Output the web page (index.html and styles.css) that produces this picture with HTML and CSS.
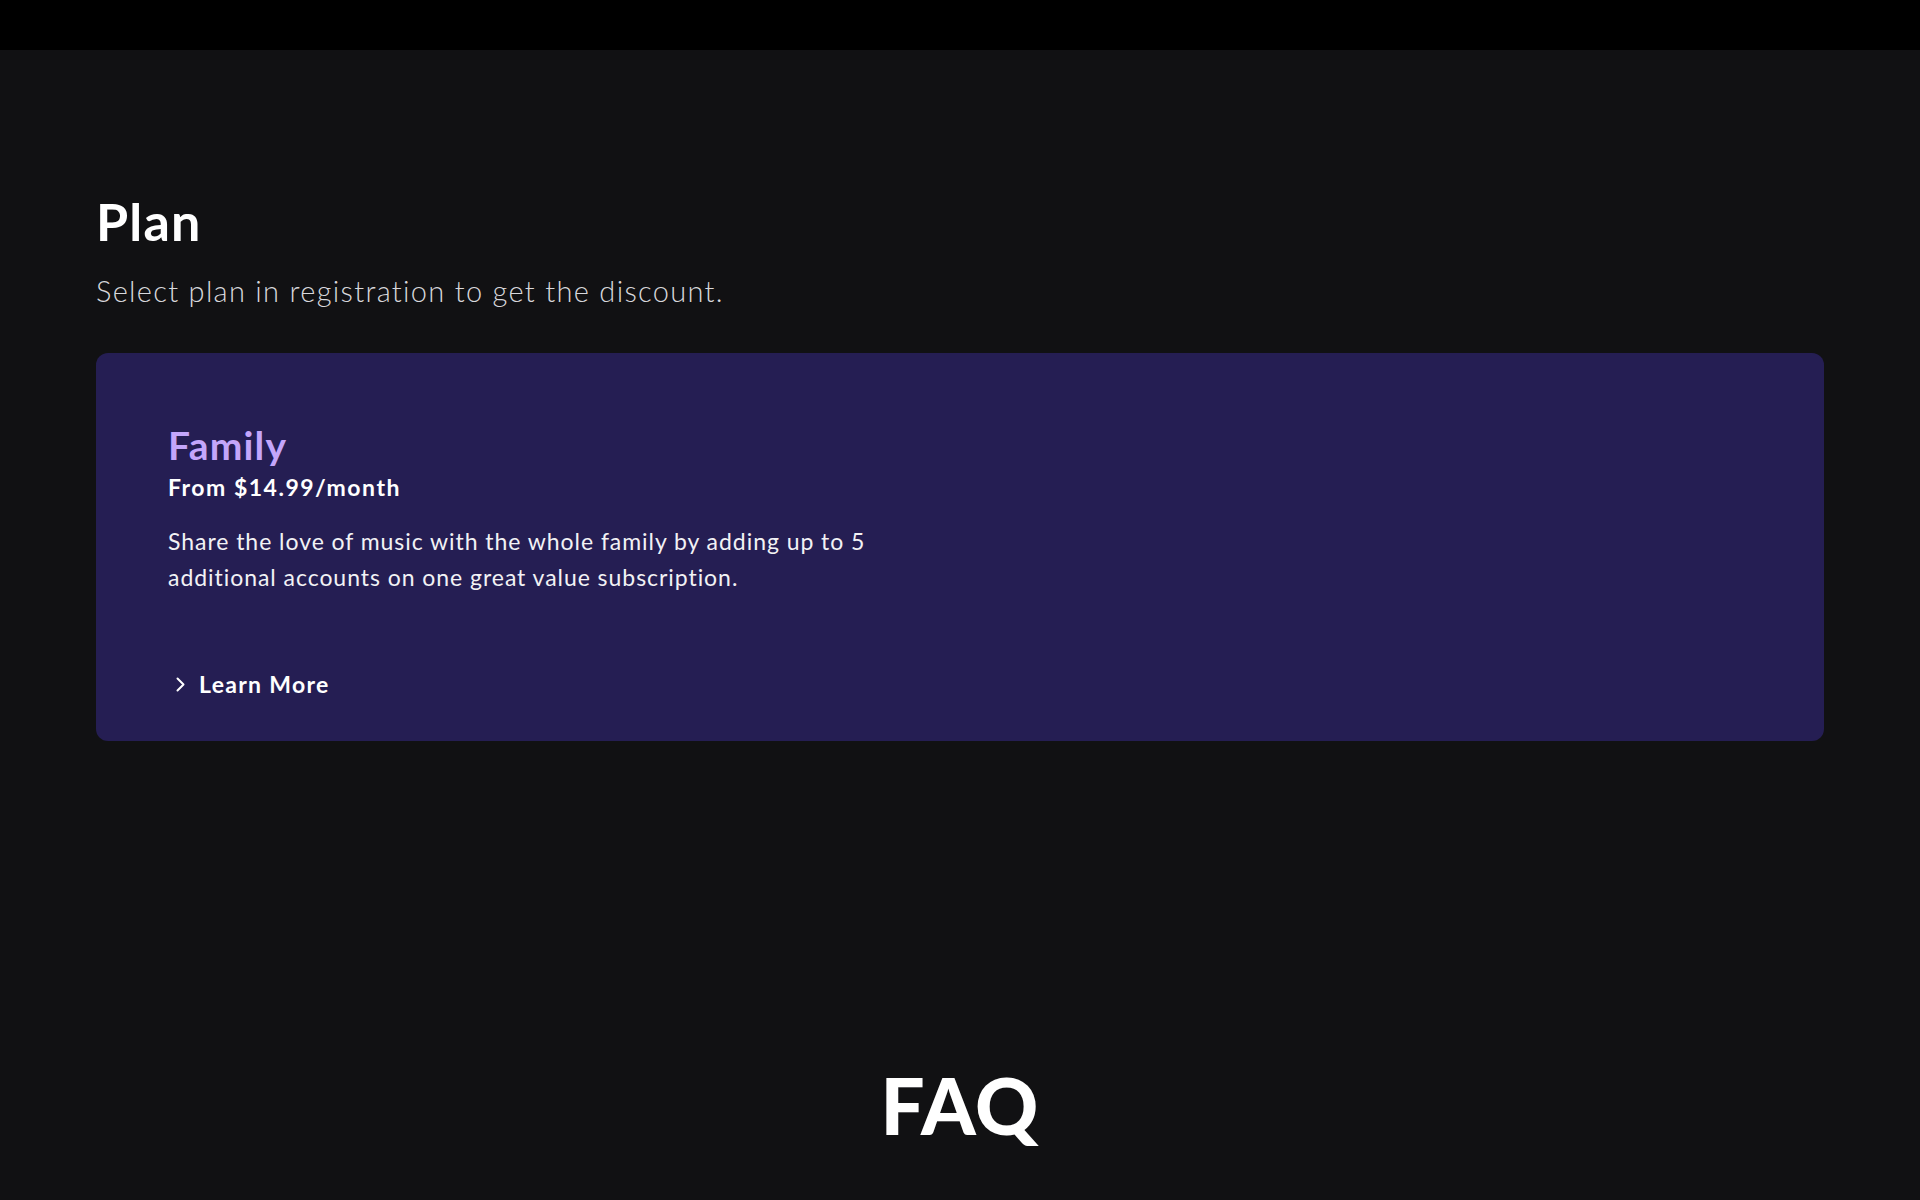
FILE: index.html
```html
<!DOCTYPE html>
<html lang="en">

<head>
    <meta charset="UTF-8">
    <meta name="viewport" content="width=device-width, initial-scale=1.0">
    <title>Plan</title>
    <link rel="stylesheet" href="styles.css">
</head>

<body>
    <div class="topbar"></div>
    <main>
        <section class="plan">
            <h1>Plan</h1>
            <p class="subtitle">Select plan in registration to get the discount.</p>
            <div class="plan-card">
                <h2>Family</h2>
                <p class="price">From $14.99/month</p>
                <p class="desc">Share the love of music with the whole family by adding up to 5 additional accounts on one great value subscription.</p>
                <a class="learn-more" href="#">
                    <svg width="9" height="15" viewBox="0 0 9 15">
                        <path d="M1.5 1.5 L7.5 7.5 L1.5 13.5" fill="none" stroke="#fff" stroke-width="2" stroke-linecap="round" stroke-linejoin="round" />
                    </svg>
                    Learn More
                </a>
            </div>
        </section>
        <section class="faq">
            <h2>FAQ</h2>
        </section>
    </main>
</body>

</html>
```
FILE: styles.css
```css
body {
    margin: 0;
    padding: 0;
    background-color: #111113;
    color: #fff;
    font-family: 'Lato', 'Noto Sans', sans-serif;
}

.topbar {
    height: 50px;
    background-color: #000;
}

.plan {
    padding: 141px 96px 0;
}

.plan h1 {
    margin: 0;
    font-size: 52px;
    line-height: 60px;
    font-weight: 700;
    letter-spacing: 1.2px;
}

.subtitle {
    margin: 21px 0 0;
    font-size: 29px;
    line-height: 38px;
    font-weight: 300;
    letter-spacing: 1.3px;
    color: #d8d8dc;
}

.plan-card {
    margin-top: 43px;
    background-color: #251e53;
    border-radius: 12px;
    padding: 69px 72px 42px;
}

.plan-card h2 {
    margin: 0;
    font-size: 39px;
    line-height: 46px;
    font-weight: 700;
    letter-spacing: 1.2px;
    color: #c4a6fb;
}

.price {
    margin: 3px 0 0;
    font-size: 23px;
    line-height: 32px;
    font-weight: 700;
    letter-spacing: 1.5px;
}

.desc {
    margin: 20px 0 0;
    max-width: 720px;
    font-size: 23px;
    line-height: 36px;
    font-weight: 400;
    letter-spacing: 0.95px;
    color: #f2f2f5;
}

.learn-more {
    display: flex;
    align-items: center;
    gap: 14px;
    margin-top: 74px;
    color: #fff;
    text-decoration: none;
    font-size: 23px;
    font-weight: 700;
    line-height: 30px;
    letter-spacing: 1.3px;
}

.learn-more svg {
    margin-left: 8px;
}

.faq {
    padding-top: 319px;
    text-align: center;
}

.faq h2 {
    margin: 0;
    font-size: 78px;
    line-height: 90px;
    font-weight: 900;
    letter-spacing: 1px;
}
```
